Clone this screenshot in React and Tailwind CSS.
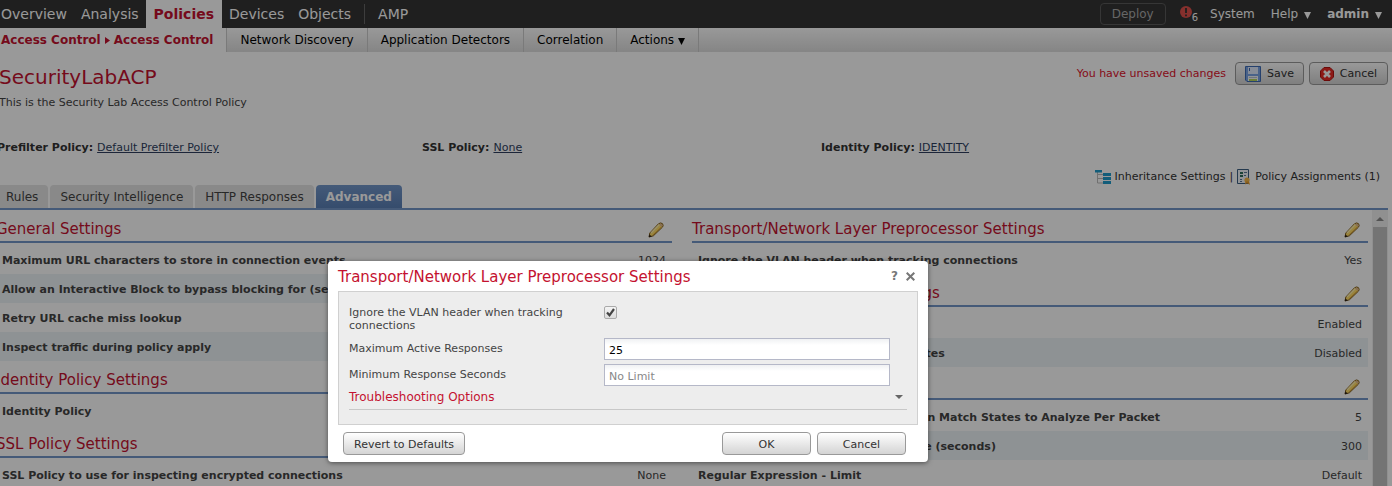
import React, { useState } from 'react';

const TABS = ['Rules', 'Security Intelligence', 'HTTP Responses', 'Advanced'];

const POLICY_LINKS = [
  { label: 'Prefilter Policy:', value: 'Default Prefilter Policy' },
  { label: 'SSL Policy:', value: 'None' },
  { label: 'Identity Policy:', value: 'IDENTITY' },
];

const LEFT_SECTIONS = [
  {
    title: 'General Settings',
    rows: [
      ['Maximum URL characters to store in connection events', '1024'],
      ['Allow an Interactive Block to bypass blocking for (seconds)', '600'],
      ['Retry URL cache miss lookup', 'Yes'],
      ['Inspect traffic during policy apply', 'Yes'],
    ],
  },
  { title: 'Identity Policy Settings', rows: [['Identity Policy', 'IDENTITY']] },
  { title: 'SSL Policy Settings', rows: [['SSL Policy to use for inspecting encrypted connections', 'None']] },
];

const RIGHT_SECTIONS = [
  {
    title: 'Transport/Network Layer Preprocessor Settings',
    rows: [['Ignore the VLAN header when tracking connections', 'Yes']],
  },
  {
    title: 'Detection Enhancement Settings',
    rows: [
      ['Adaptive Profiles', 'Enabled'],
      ['Adaptive Profiles - Enable Rule Updates', 'Disabled'],
    ],
  },
  {
    title: 'Performance Settings',
    rows: [
      ['Pattern Matching Limits - Max Pattern Match States to Analyze Per Packet', '5'],
      ['Performance Statistics - Sample Time (seconds)', '300'],
      ['Regular Expression - Limit', 'Default'],
    ],
  },
];

function PencilIcon() {
  return (
    <svg width="16" height="16" viewBox="0 0 16 16" aria-hidden="true">
      <path d="M1 15 1.800 11 10.500 1.800Q12.600.2 14.400 1.600 15.800 3.200 14.600 5L5.400 13.800Z" fill="#ffdc66" stroke="#7d5a1c" strokeLinejoin="round" />
      <path d="M3 11 11.400 2.600" stroke="#fff0b0" strokeWidth="1.400" />
      <path d="M5 13 13.800 4.600" stroke="#dda63a" strokeWidth="1" />
      <path d="m11 2.200 2.800 2.800.9-1.200-.6-1.500-1.600-.7Z" fill="#e0b890" />
      <path d="m.8 15.200.6-2.800L3.800 14.400Z" fill="#2b2118" />
    </svg>
  );
}

function SaveIcon() {
  return (
    <svg width="16" height="16" viewBox="0 0 16 16" aria-hidden="true">
      <path d="M.5.5h15v15H2L.5 14Z" fill="#7ba4e4" stroke="#3f6cb4" />
      <path d="M3 1h10v7H3Z" fill="#dfeafc" />
      <path d="M4 2h1v3H4Z" fill="#3f6cb4" />
      <path d="M3 10h10v5H3Z" fill="#f4f7fb" />
      <path d="M4 11h8v1H4Z" fill="#b8c4d4" />
      <path d="M4 13h8v2H4Z" fill="#b4d45c" />
    </svg>
  );
}

function CancelIcon() {
  return (
    <svg width="14" height="14" viewBox="0 0 14 14" aria-hidden="true">
      <path d="M4 .5h6L13.500 4v6L10 13.500H4L.5 10V4Z" fill="#ea2a26" stroke="#b3120f" strokeLinejoin="round" />
      <path d="m4 4 6 6M10 4l-6 6" stroke="#fff" strokeWidth="2.600" />
    </svg>
  );
}

function InheritanceIcon() {
  return (
    <svg width="16" height="16" viewBox="0 0 16 16" aria-hidden="true">
      <path d="M2.500 3v11H9M2.500 9.500H9M2.500 5.500H9" fill="none" stroke="#bbb" />
      <path d="M0 1h7v2.500H0ZM8 4h8v3H8ZM8 8h8v3H8ZM8 12h8v3H8Z" fill="#1f9ccb" />
    </svg>
  );
}

function AssignmentsIcon() {
  return (
    <svg width="14" height="16" viewBox="0 0 14 16" aria-hidden="true">
      <path d="M.5.5h11v14H.5Z" fill="#f2f6fa" stroke="#3d5f82" />
      <path d="M3 3h3v2H3ZM3 6h3v2H3Z" fill="#2f6f5c" />
      <path d="M7 3.500h3M7 6.500h2M3 10.500h2M3 12.500h2" stroke="#5b7896" />
      <circle cx="10" cy="11" r="2.600" fill="#f5b848" />
      <path d="m8.500 12.500-.5 3 2-1.300 3 1.500-1-3.200Z" fill="#e59a2a" />
    </svg>
  );
}

function Caret() {
  return (
    <svg className="mt-0.5" width="7" height="7" viewBox="0 0 7 7" aria-hidden="true">
      <path d="M0 0h7L3.500 7Z" fill="currentColor" />
    </svg>
  );
}

const GLOSS_BUTTON =
  'flex h-[23px] items-center justify-center rounded border border-[#999] bg-linear-to-b from-white to-[#d4d4d4] text-[11px] text-[#333]';

function TopNav() {
  return (
    <header className="flex h-7 items-stretch bg-[#343434] pr-2.5 text-sm text-white">
      <nav className="-ml-1.5 flex items-stretch">
        <a href="#overview" className="flex items-center px-[7px]">Overview</a>
        <a href="#analysis" className="flex items-center px-[7px]">Analysis</a>
        <a href="#policies" className="flex items-center bg-white px-2 font-bold text-[#c41230]">Policies</a>
        <a href="#devices" className="flex items-center px-[7px]">Devices</a>
        <a href="#objects" className="flex items-center px-[7px]">Objects</a>
        <span className="mx-1.5 my-1 w-px bg-[#666]" />
        <a href="#amp" className="flex items-center px-[7px]">AMP</a>
      </nav>
      <div className="ml-auto flex items-center text-xs">
        <button className="h-[22px] w-[66px] rounded border border-[#5a5a5a] text-[#aaa]">Deploy</button>
        <a href="#alerts" className="ml-3.5 flex h-4 items-start" aria-label="6 alerts">
          <svg width="12" height="12" viewBox="0 0 12 12" aria-hidden="true">
            <circle cx="6" cy="6" r="6" fill="#e0504c" />
            <path d="M6 2v5M6 8.400v1.800" stroke="#343434" strokeWidth="1.800" />
          </svg>
          <span className="self-end text-[10px] leading-[8px]">6</span>
        </a>
        <a href="#system" className="ml-3">System</a>
        <a href="#help" className="ml-4 flex items-center gap-1.5">Help <Caret /></a>
        <a href="#admin" className="ml-4 flex items-center gap-1.5 font-bold">admin <Caret /></a>
      </div>
    </header>
  );
}

function SubNav() {
  return (
    <nav className="flex h-6 items-stretch bg-linear-to-b from-white to-[#dedede] text-xs text-black">
      <a href="#access-control" className="flex items-center gap-1 border-r border-[#ccc] bg-white pr-[13px] pl-px font-bold text-[#c41230]">
        Access Control
        <svg width="5" height="7" viewBox="0 0 5 7" aria-hidden="true"><path d="M0 0 5 3.500 0 7Z" fill="currentColor" /></svg>
        Access Control
      </a>
      <a href="#network-discovery" className="flex items-center border-r border-[#ccc] px-[13px]">Network Discovery</a>
      <a href="#application-detectors" className="flex items-center border-r border-[#ccc] px-[13px]">Application Detectors</a>
      <a href="#correlation" className="flex items-center border-r border-[#ccc] px-[13px]">Correlation</a>
      <a href="#actions" className="flex items-center gap-1 border-r border-[#ccc] px-[13px]">Actions <Caret /></a>
    </nav>
  );
}

function Section({ title, rows }) {
  return (
    <section>
      <div className="flex h-[33px] items-center justify-between border-b-2 border-[#7396c8] pt-2 pr-2">
        <h2 className="text-[15px] text-[#c41230]">{title}</h2>
        <button aria-label={`Edit ${title}`}><PencilIcon /></button>
      </div>
      <table className="mt-0.5 w-full">
        <tbody>
          {rows.map(([label, value]) => (
            <tr key={label} className="h-[29px] even:bg-[#edf3f7]">
              <th scope="row" className="pt-[3px] pl-1.5 text-left font-bold whitespace-nowrap">{label}</th>
              <td className="pt-[3px] pr-1.5 text-right">{value}</td>
            </tr>
          ))}
        </tbody>
      </table>
    </section>
  );
}

function SettingsDialog() {
  const [ignoreVlan, setIgnoreVlan] = useState(true);
  const [maxResponses, setMaxResponses] = useState('25');
  const [minSeconds, setMinSeconds] = useState('');

  const inputClass =
    'h-[22px] w-[286px] border border-[#b5b8c8] bg-linear-to-b from-[#f0f1f3] to-white to-30% px-1 pt-0.5 text-[11px] text-black outline-none placeholder:text-[#888]';

  return (
    <div role="dialog" aria-labelledby="dialog-title" className="w-[600px] rounded bg-white px-2.5 pb-[7px] text-[11px] text-[#444] shadow-[0_1px_5px_rgba(0,0,0,0.5)]">
      <div className="flex h-[30px] items-center">
        <h2 id="dialog-title" className="flex-1 pt-0.5 text-[15px] text-[#c41230]">Transport/Network Layer Preprocessor Settings</h2>
        <button aria-label="Help" className="mr-2 text-xs font-bold text-[#777]">?</button>
        <button aria-label="Close" className="mr-[3px] text-[#777]">
          <svg width="9" height="9" viewBox="0 0 9 9" aria-hidden="true">
            <path d="m.7.7 7.600 7.600M8.300.7.7 8.300" stroke="currentColor" strokeWidth="2" />
          </svg>
        </button>
      </div>

      <div className="h-[134px] border border-[#d0d0d0] bg-[#ededed] px-2.5 pt-3.5">
        <div className="flex h-8 items-start">
          <label htmlFor="ignore-vlan" className="w-[255px] pr-5 leading-[13px]">Ignore the VLAN header when tracking connections</label>
          <span className="relative h-[13px] w-[13px]">
            <input
              id="ignore-vlan" type="checkbox"
              checked={ignoreVlan}
              onChange={(e) => setIgnoreVlan(e.target.checked)}
              className="block h-[13px] w-[13px] appearance-none rounded-xs border border-[#aaa] bg-linear-to-b from-[#f4f4f4] to-[#dcdcdc]"
            />
            {ignoreVlan && (
              <svg className="pointer-events-none absolute inset-0" width="13" height="13" viewBox="0 0 13 13" aria-hidden="true">
                <path d="m3 6.500 2.500 2.800L10 3" fill="none" stroke="#444" strokeWidth="2.200" />
              </svg>
            )}
          </span>
        </div>
        <div className="flex h-[26px] items-start">
          <label htmlFor="max-responses" className="w-[255px] leading-[21px]">Maximum Active Responses</label>
          <input id="max-responses" type="text" value={maxResponses} onChange={(e) => setMaxResponses(e.target.value)} className={inputClass} />
        </div>
        <div className="flex h-[26px] items-start">
          <label htmlFor="min-seconds" className="w-[255px] leading-[21px]">Minimum Response Seconds</label>
          <input id="min-seconds" type="text" placeholder="No Limit" value={minSeconds} onChange={(e) => setMinSeconds(e.target.value)} className={inputClass} />
        </div>
        <button className="flex h-5 w-full items-center justify-between border-b border-[#c8c8c8] pr-1 pb-1.5 text-xs text-[#c41230]">
          Troubleshooting Options
          <svg width="8" height="4" viewBox="0 0 8 4" aria-hidden="true"><path d="M0 0h8L4 4Z" fill="#666" /></svg>
        </button>
      </div>

      <div className="flex gap-1.5 pt-[7px] pr-3 pl-[5px]">
        <button className={`${GLOSS_BUTTON} mr-auto w-[122px] pt-1`}>Revert to Defaults</button>
        <button className={`${GLOSS_BUTTON} w-[89px] pt-1`}>OK</button>
        <button className={`${GLOSS_BUTTON} w-[89px] pt-1`}>Cancel</button>
      </div>
    </div>
  );
}

export default function App() {
  const [activeTab, setActiveTab] = useState('Advanced');

  return (
    <div className="relative h-screen overflow-hidden bg-white font-['DejaVu_Sans',Verdana,sans-serif] text-[11px] text-[#444]">
      <TopNav />
      <SubNav />

      {/* Policy title + actions */}
      <div className="-ml-px flex h-[86px] items-start justify-between pt-2.5 pr-1">
        <div>
          <h1 className="text-xl leading-[30px] text-[#c41230]">SecurityLabACP</h1>
          <p className="leading-[22px]">This is the Security Lab Access Control Policy</p>
        </div>
        <div className="flex items-center gap-[5px]">
          <span className="mr-1 pt-0.5 text-[#e0122c]">You have unsaved changes</span>
          <button className={`${GLOSS_BUTTON} w-[69px] gap-1.5`}><SaveIcon /><span className="pt-0.5">Save</span></button>
          <button className={`${GLOSS_BUTTON} w-[79px] gap-1.5`}><CancelIcon /><span className="pt-0.5">Cancel</span></button>
        </div>
      </div>

      {/* Linked policies */}
      <dl className="-ml-[3px] grid h-5 grid-cols-[425fr_399fr_571fr] leading-5">
        {POLICY_LINKS.map((item) => (
          <div key={item.label} className="flex gap-1">
            <dt className="font-bold text-[#333]">{item.label}</dt>
            <dd><a href="#policy" className="text-[#2f3f5f] underline">{item.value}</a></dd>
          </div>
        ))}
      </dl>

      <div className="flex h-[27px] items-end justify-end gap-1 pr-3 leading-4 text-[#333]">
        <InheritanceIcon />
        <a href="#inheritance">Inheritance Settings</a>
        <span>|</span>
        <AssignmentsIcon />
        <a href="#assignments">Policy Assignments (1)</a>
      </div>

      {/* Tabs */}
      <div role="tablist" className="mr-1 -ml-1 flex h-[25px] items-stretch gap-0.5 border-b-2 border-[#7396c8] text-xs">
        {TABS.map((tab) => (
          <button
            key={tab} role="tab" aria-selected={tab === activeTab}
            onClick={() => setActiveTab(tab)}
            className={`rounded-t px-2.5 ${tab === activeTab ? 'bg-linear-to-b from-[#7397ca] to-[#5a7fb5] font-bold text-white' : 'bg-[#e4e4e4] text-[#444]'}`}
          >
            {tab}
          </button>
        ))}
      </div>

      <div className="mr-1 -ml-1 flex">
        <div className="grid min-w-0 flex-1 grid-cols-2 gap-5">
          <div>{LEFT_SECTIONS.map((s) => <Section key={s.title} {...s} />)}</div>
          <div>{RIGHT_SECTIONS.map((s) => <Section key={s.title} {...s} />)}</div>
        </div>
        <div className="ml-1 w-4 bg-[#f1f1f1] px-px" aria-hidden="true">
          <div className="flex h-[17px] items-center justify-center">
            <svg width="8" height="4" viewBox="0 0 8 4"><path d="M4 0 8 4H0Z" fill="#8a8a8a" /></svg>
          </div>
          <div className="h-full bg-[#c1c1c1]" />
        </div>
      </div>

      {/* Dialog over the dimmed page */}
      <div className="absolute inset-0 bg-black/40 pt-[261px] pl-[328px]">
        <SettingsDialog />
      </div>
    </div>
  );
}
